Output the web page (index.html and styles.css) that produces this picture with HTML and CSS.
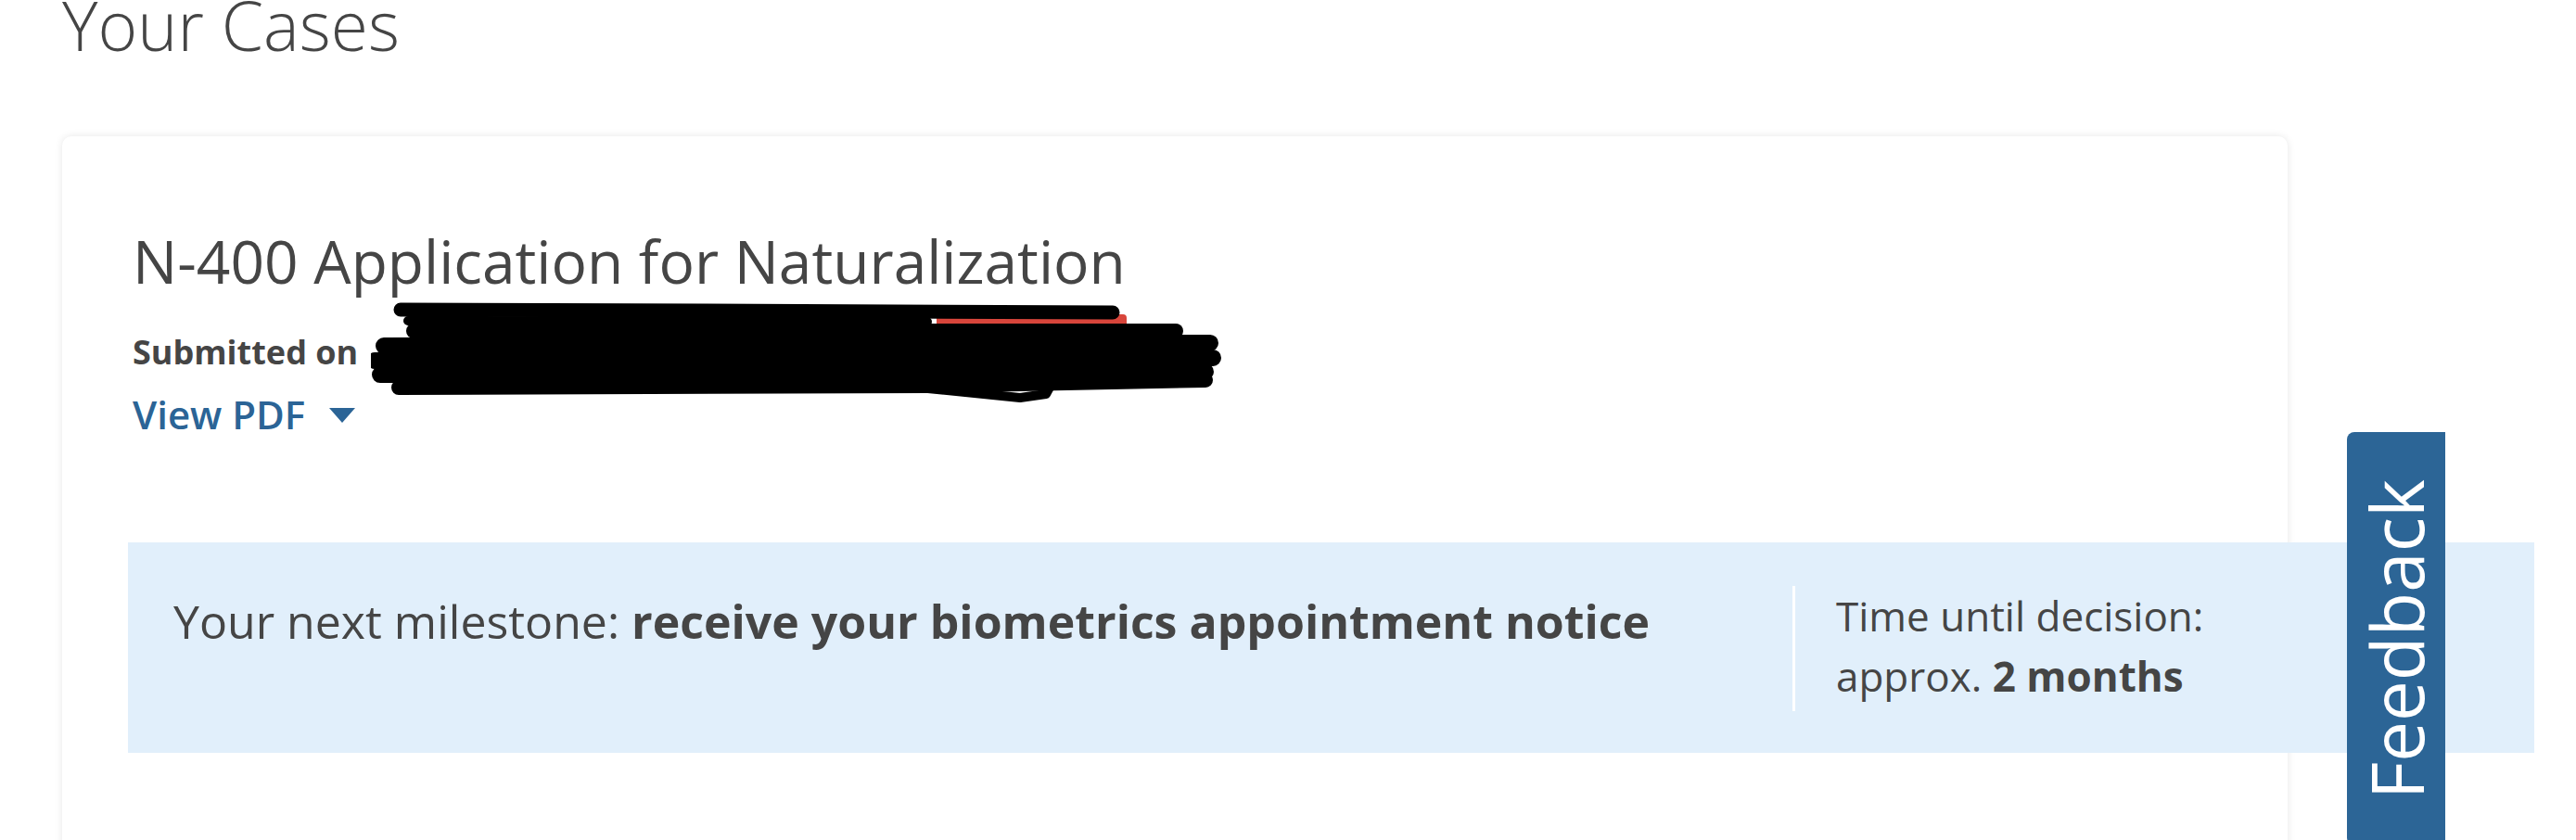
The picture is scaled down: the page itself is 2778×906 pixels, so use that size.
FILE: index.html
```html
<!DOCTYPE html>
<html lang="en">
<head>
    <meta charset="UTF-8">
    <meta name="viewport" content="width=device-width, initial-scale=1.0">
    <title>Your Cases</title>
    <link rel="stylesheet" href="styles.css">
</head>
<body>
    <div class="page">
        <h1>Your Cases</h1>

        <!-- Cartão do caso -->
        <div class="case-card">
            <h2 class="case-title">N-400 Application for Naturalization</h2>
            <div class="case-meta">
                <p class="submitted">Submitted on</p>
                <a class="view-pdf" href="#">View PDF <span class="caret"></span></a>

                <!-- Data riscada na captura original -->
                <svg class="scribble" width="930" height="130" viewBox="0 0 930 130" aria-hidden="true">
                    <rect x="610" y="24" width="205" height="80" rx="4" fill="#d8453b"/>
                    <g fill="none" stroke="#000" stroke-linecap="round" stroke-linejoin="round">
                        <polyline stroke-width="15" points="32,19 360,20 800,22"/>
                        <polyline stroke-width="10" points="40,31 600,32"/>
                        <polyline stroke-width="16" points="46,42 868,42"/>
                        <polyline stroke-width="18" points="14,58 905,55"/>
                        <polyline stroke-width="18" points="4,74 908,71"/>
                        <polyline stroke-width="18" points="10,89 900,86"/>
                        <polyline stroke-width="16" points="30,103 600,101 900,95"/>
                        <polyline stroke-width="10" points="560,100 700,114 728,110 734,99"/>
                    </g>
                </svg>
            </div>

            <div class="milestone">
                <div class="milestone-next">
                    Your next milestone: <strong>receive your biometrics appointment notice</strong>
                </div>
                <div class="milestone-time">
                    Time until decision:<br>
                    approx. <strong>2 months</strong>
                </div>
            </div>
        </div>
    </div>

    <a class="feedback-tab" href="#"><span>Feedback</span></a>
</body>
</html>
```

FILE: styles.css
```css
/* Estilo do corpo */
body {
    font-family: "Open Sans", "Noto Sans", sans-serif;
    background-color: #fff;
    color: #454545;
    margin: 0;
    padding: 0;
    overflow: hidden;
}

.page {
    padding-left: 67px;
}

/* Estilo do título da página */
h1 {
    font-size: 73px;
    font-weight: 300;
    line-height: 1;
    margin: -10px 0 84px;
    color: #454545;
}

/* Estilo do cartão */
.case-card {
    width: 2400px;
    box-sizing: border-box;
    background-color: #fff;
    border-radius: 10px;
    box-shadow: 0 0 8px rgba(0, 0, 0, 0.1);
    padding: 103px 76px 220px;
}

.case-title {
    font-size: 64px;
    font-weight: 400;
    line-height: 1;
    margin: 0 0 48px;
}

.case-meta {
    position: relative;
}

.submitted {
    font-size: 36px;
    font-weight: 700;
    line-height: 1;
    margin: 0 0 28px;
}

.view-pdf {
    display: inline-flex;
    align-items: center;
    gap: 26px;
    font-size: 42px;
    font-weight: 600;
    line-height: 1;
    color: #2b6496;
    text-decoration: none;
}

.caret {
    width: 0;
    height: 0;
    border-left: 14px solid transparent;
    border-right: 14px solid transparent;
    border-top: 16px solid #2b6496;
    margin-top: 2px;
}

.scribble {
    position: absolute;
    left: 257px;
    top: -47px;
}

/* Estilo da faixa de marco */
.milestone {
    display: flex;
    width: 2595px;
    box-sizing: border-box;
    margin: 117px 0 0 -5px;
    padding: 47px 49px 45px;
    background-color: #e1effb;
}

.milestone-next {
    flex: 0 0 1746px;
    font-size: 50px;
    line-height: 65px;
    padding-top: 6px;
}

.milestone-time {
    border-left: 3px solid #fff;
    padding: 0 0 5px 44px;
    font-size: 44px;
    line-height: 65px;
}

/* Aba de feedback */
.feedback-tab {
    position: fixed;
    top: 466px;
    right: 141px;
    width: 106px;
    height: 446px;
    display: flex;
    justify-content: center;
    align-items: center;
    background-color: #2c6596;
    border-radius: 8px 0 0 8px;
    color: #fff;
    text-decoration: none;
}

.feedback-tab span {
    writing-mode: vertical-rl;
    transform: rotate(180deg);
    font-size: 78px;
    line-height: 1;
}
```
